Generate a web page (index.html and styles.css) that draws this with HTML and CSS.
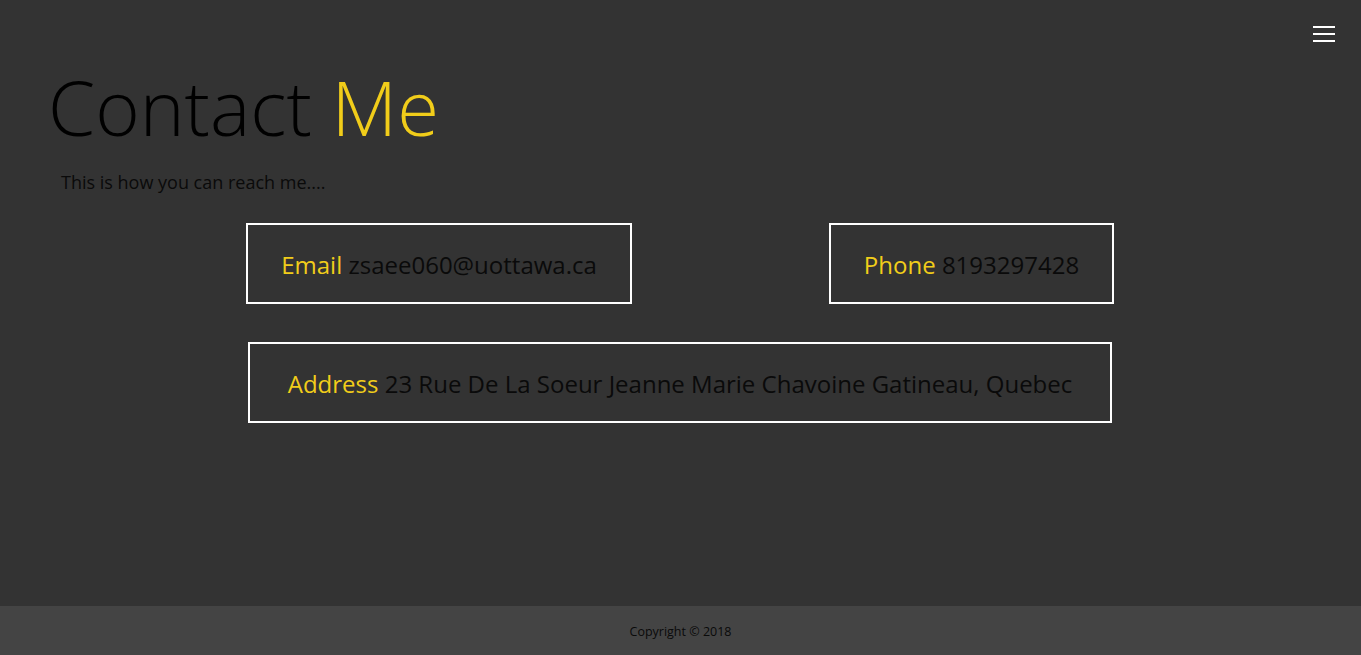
FILE: index.html
```html
<!DOCTYPE html>
<html lang="en">
<head>
<meta charset="utf-8">
<title>Contact Me</title>
<link rel="stylesheet" href="styles.css">
</head>
<body>
<div class="page">
  <header class="topbar">
    <button class="menu" aria-label="Menu">
      <span></span><span></span><span></span>
    </button>
  </header>
  <main class="content">
    <h1 class="title">Contact <span class="hl">Me</span></h1>
    <p class="lead">This is how you can reach me....</p>
    <div class="row">
      <div class="box box-email"><p class="box-text"><span class="hl">Email</span> zsaee060@uottawa.ca</p></div>
      <div class="box box-phone"><p class="box-text"><span class="hl">Phone</span> 8193297428</p></div>
    </div>
    <div class="row row-address">
      <div class="box box-address"><p class="box-text"><span class="hl">Address</span> 23 Rue De La Soeur Jeanne Marie Chavoine Gatineau, Quebec</p></div>
    </div>
  </main>
  <footer class="footer"><p class="footer-text">Copyright © 2018</p></footer>
</div>
</body>
</html>
```
FILE: styles.css
```css
* { box-sizing: border-box; }
html, body { margin: 0; padding: 0; height: 100%; }
body {
  background: #333333;
  font-family: "Open Sans", "Noto Sans", sans-serif;
  color: #0a0a0a;
}
.page {
  min-height: 655px;
  display: flex;
  flex-direction: column;
}
.topbar {
  display: flex;
  justify-content: flex-end;
  padding: 26px 26px 0 0;
  height: 60px;
}
.menu {
  background: none;
  border: 0;
  padding: 0;
  width: 22px;
  height: 16px;
  display: flex;
  flex-direction: column;
  justify-content: space-between;
}
.menu span {
  display: block;
  height: 2px;
  width: 22px;
  background: #ffffff;
}
.content { flex: 1; }
.title {
  margin: 0;
  padding-left: 48px;
  font-weight: 300;
  font-size: 76px;
  line-height: 94px;
  color: #000000;
}
.hl { color: #f1cd1a; }
.lead {
  margin: 0;
  padding: 16px 0 0 61px;
  font-size: 18px;
  line-height: 24px;
}
.row {
  display: flex;
  justify-content: center;
  gap: 197px;
  margin-top: 29px;
  padding-right: 1px;
}
.row-address { margin-top: 38px; }
.box {
  border: 2px solid #ffffff;
  height: 81px;
  display: flex;
  align-items: center;
  justify-content: center;
  padding-top: 2px;
}
.box-text {
  margin: 0;
  font-size: 24px;
  white-space: nowrap;
}
.box-email { width: 386px; }
.box-phone { width: 285px; }
.box-address { width: 864px; }
.footer {
  background: #444444;
  height: 49px;
  display: flex;
  align-items: center;
  justify-content: center;
  padding-top: 2px;
}
.footer-text {
  margin: 0;
  font-size: 12.5px;
  color: #0a0a0a;
}
```
